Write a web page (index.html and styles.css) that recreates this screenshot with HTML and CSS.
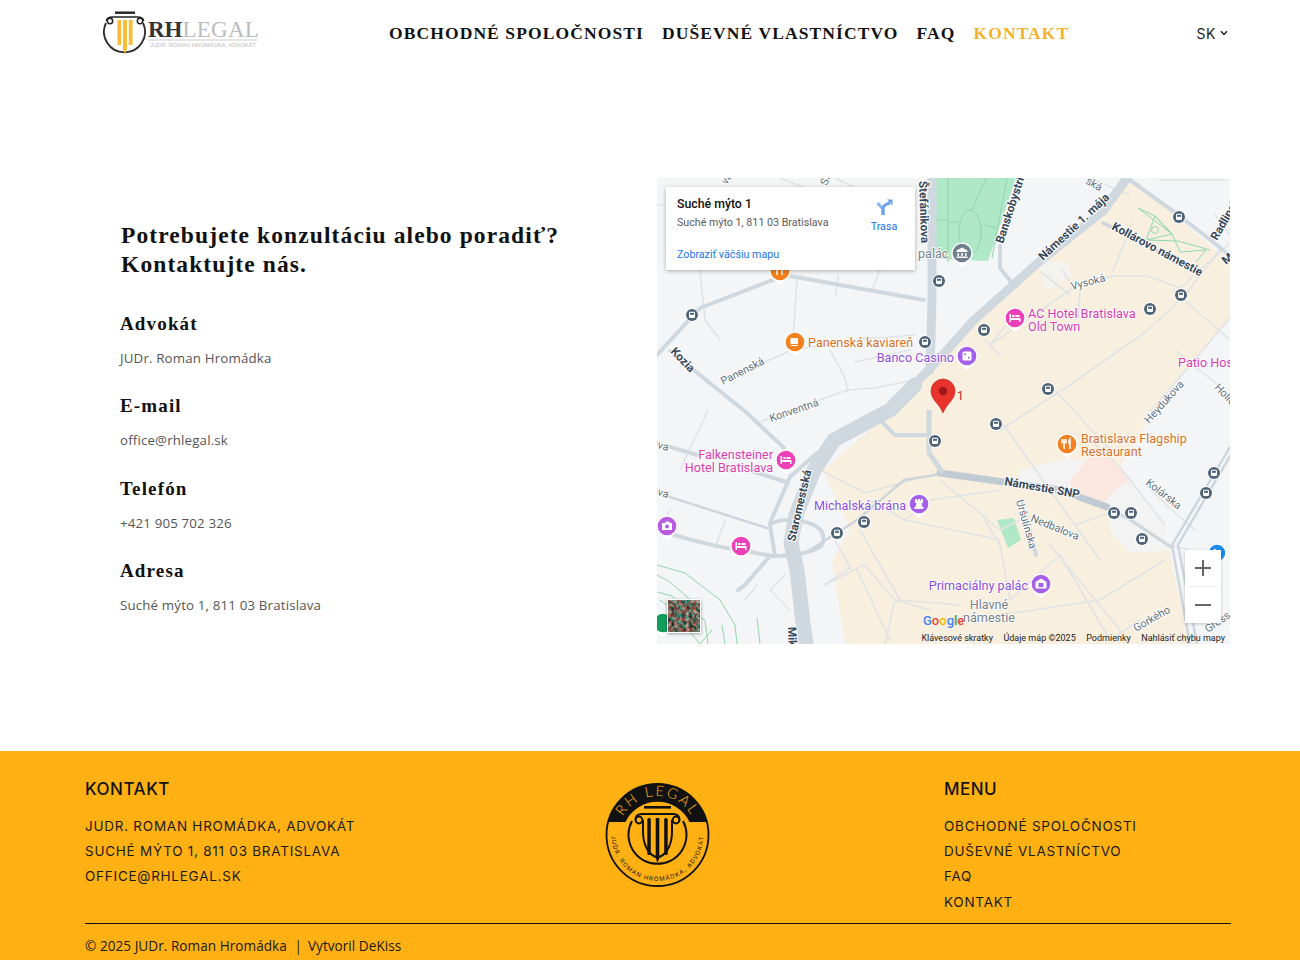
FILE: index.html
```html
<!DOCTYPE html>
<html lang="sk">
<head>
<meta charset="utf-8">
<title>RH Legal – Kontakt</title>
<link rel="stylesheet" href="styles.css">
</head>
<body>
<header class="site-header">
  <a class="logo" href="#">
    <svg class="logo-svg" viewBox="103 10 156 46" width="156" height="46">
      <path class="l-ring" d="M106 23 A20.500 20.500 0 1 0 143 23"/>
      <rect class="l-black" x="115" y="11.500" width="20" height="2.400"/>
      <path class="l-cap" d="M106.500 21 C106.500 17 110 17 113 17 H137 C140 17 143.500 17 143.500 21"/>
      <circle class="l-scroll" cx="110" cy="21" r="2.700"/>
      <circle class="l-scroll" cx="140" cy="21" r="2.700"/>
      <rect class="l-gold" x="117.500" y="20" width="3.800" height="25"/>
      <path class="l-gold" d="M123 20 H127 V49 L125 54 L123 49Z"/>
      <rect class="l-gold" x="128.800" y="20" width="3.800" height="25"/>
      <text class="l-rh" x="148" y="37">RH<tspan class="l-legal">LEGAL</tspan></text>
      <rect class="l-rule" x="148" y="39.500" width="109" height="1"/>
      <text class="l-sub" x="150" y="47">JUDR. ROMAN HROMÁDKA, ADVOKÁT</text>
    </svg>
  </a>
  <nav class="main-nav">
    <a href="#">OBCHODNÉ SPOLOČNOSTI</a>
    <a href="#">DUŠEVNÉ VLASTNÍCTVO</a>
    <a href="#">FAQ</a>
    <a class="is-active" href="#">KONTAKT</a>
  </nav>
  <div class="lang">SK <svg class="lang-caret" width="8" height="6" viewBox="0 0 8 6"><path d="M1 1.200 L4 4.400 L7 1.200"/></svg></div>
</header>

<main class="contact">
  <section class="contact-info">
    <h1>Potrebujete konzultáciu alebo poradiť?<br>Kontaktujte nás.</h1>
    <div class="item"><h3>Advokát</h3><p>JUDr. Roman Hromádka</p></div>
    <div class="item"><h3>E-mail</h3><p>office@rhlegal.sk</p></div>
    <div class="item"><h3>Telefón</h3><p>+421 905 702 326</p></div>
    <div class="item"><h3>Adresa</h3><p>Suché mýto 1, 811 03 Bratislava</p></div>
  </section>

  <div class="map">
    <svg class="map-svg" viewBox="657 178 573 466" width="573" height="466">
      <defs>
        <symbol id="pin" overflow="visible">
          <path class="pin-halo" d="M0 14 L-6.500 8.800 A10.800 10.800 0 1 1 6.500 8.800Z"/>
          <circle class="pin-fill" r="9.300"/>
        </symbol>
        <symbol id="tr" overflow="visible">
          <circle class="tr-halo" r="7"/>
          <circle class="tr-fill" r="6"/>
          <rect class="tr-glyph" x="-3" y="-3.200" width="6" height="6.200" rx="1.200"/>
          <rect class="tr-fill" x="-2" y="-2.200" width="4" height="2"/>
        </symbol>
        <filter id="sat-noise" x="0" y="0" width="100%" height="100%" color-interpolation-filters="sRGB">
          <feTurbulence type="fractalNoise" baseFrequency="0.28" numOctaves="3" seed="7"/>
          <feColorMatrix type="matrix" values="1.500 0 0 0 -.33  .4 .9 0 0 -.25  .4 .8 0 0 -.25  0 0 0 0 1"/>
        </filter>
      </defs>

      <rect class="m-bg" x="657" y="178" width="573" height="466"/>
      <!-- old town -->
      <path class="m-town" d="M1130 178 L1230 262 V318 L1153 411 L1120 467 L1167 543 L1187 627 L1195 644 H845 L832 560 L850 530 L823 470 L905 400 L940 358 L1040 261 L1103 211Z"/>
      <path class="m-pale" d="M1040 262 L1068 262 L1072 275 L1050 290 L1042 285Z"/>
      <path class="m-white" d="M1020 470 L1070 458 L1117 470 L1165 525 L1167 550 L1130 553 L1110 530 L1107 507 L1020 482Z"/>
      <path class="m-pink" d="M1070 480 L1090 457 L1108 457 L1130 478 L1112 492 L1105 503 L1072 492Z"/>
      <!-- greens -->
      <path class="m-green" d="M935 178 H1016 L988 261 L940 259 L935 240Z"/>
      <path class="m-green" d="M997 520 L1014 518 L1021 540 L1008 548Z"/>
      <g class="m-park">
        <ellipse cx="970" cy="232" rx="11" ry="22"/>
        <path d="M948 178 V262 M986 178 L972 210 M948 222 H958 M985 225 L996 228 M1007 178 L992 258 M936 220 H948"/>
        <path d="M1138 208 L1155 216 L1172 234 L1180 252 L1206 250 L1196 262 M1155 216 L1146 240 L1172 234 L1155 216 M1146 240 L1178 241 L1210 250 M1138 208 L1172 234"/>
        <circle cx="1155" cy="230" r="3.500"/>
        <path d="M657 565 L685 573 L720 600 L735 625 L737 644 M657 592 L672 596 L690 612 L705 620 L708 644 M725 644 L722 625 M760 644 L757 618 M700 644 L712 630 M657 575 L670 582 L702 610 M660 600 L668 606 M690 632 L700 644"/>
      </g>
      <!-- minor roads -->
      <g class="r-thin">
        <path d="M780 178 L810 190 M835 178 L860 190 M657 205 L700 207 M700 270 L705 320 L720 340 M838 275 L836 295 M880 270 L872 290 M797 280 L792 355"/>
        <path d="M722 381 L790 351 L850 340 L915 335 M855 362 L910 350 M830 350 L845 378 L848 392"/>
        <path d="M757 423 L817 401 L847 390 L874 388 L925 378"/>
        <path d="M708 410 L680 470 M670 510 L660 530 M725 520 L715 548"/>
        <path d="M1090 178 L1130 195 M1225 180 L1160 180 M1215 215 L1230 235"/>
        <path d="M1041 272 L1070 295 M1062 270 L1075 290 M990 345 L1073 288 L1113 276 L1147 276 L1180 288 L1230 243"/>
        <path d="M985 340 L1000 355 M1010 320 L990 345 M1078 318 L1080 290 M1113 271 L1132 223"/>
        <path d="M1000 430 L1070 385 L1148 330 L1185 295 L1220 250"/>
        <path d="M1173 290 L1230 340 M1175 350 L1230 395 M1150 412 L1230 318"/>
        <path d="M1000 420 L1100 560 M1050 385 L1110 450 M1090 440 L1120 467 L1165 525"/>
        <path d="M940 480 L1000 530 L1020 520 M985 520 L1000 545 L1010 600 M905 520 L1000 540"/>
        <path d="M870 500 L905 520 L930 500 L1000 490 M860 530 L900 600 L960 605 M824 585 L864 565 L895 600 L930 610 M895 600 L885 644 M857 570 L890 640"/>
        <path d="M820 470 L865 493 L912 480 M824 585 L850 568 L835 540"/>
        <path d="M1075 525 L1110 513 M1050 545 L1120 630 M1010 600 L1060 555 M1000 615 L1100 600 L1165 560 M1060 555 L1110 640 L1140 620"/>
        <path d="M1145 484 L1172 510 L1195 530 M1130 518 L1170 545 L1190 550"/>
        <path d="M754 472 L790 485 M757 585 L745 600 M785 575 L770 590 L790 610"/>
      </g>
      <g class="r-mid">
        <path d="M657 355 L700 308 L770 281 L790 276 L924 300"/>
        <path d="M670 351 L747 413 L784 448"/>
        <path d="M657 443 L697 455 M754 472 L787 482"/>
        <path d="M674 535 C700 542 720 548 740 550 L772 556 C795 556 815 552 822 545 C826 535 822 526 805 522 C790 518 775 520 770 525 L775 556"/>
        <path d="M770 523 L790 477 L817 453"/>
        <path d="M880 420 L895 435 L925 435"/>
        <path d="M1022 501 L1036 555"/>
        <path d="M1127 178 L1173 211 L1212 241 L1230 256"/>
        <path d="M1103 223 L1140 241 L1200 275"/>
        <path d="M1000 246 L1000 268 L1012 283"/>
        <path d="M769 557 L745 585 L738 590"/>
      </g>
      <g class="r-line">
        <path d="M657 493 L767 528"/>
        <path d="M810 550 L857 520 L904 480 L947 473"/>
        <path d="M1230 447 L1172 545 L1190 644 M1230 456 L1178 545 L1197 644"/>
        <path d="M1107 507 L1130 520 L1172 548"/>
      </g>
      <g class="r-main">
        <path d="M1127 178 L1103 211 L1040 261 L973 321 L940 358 L890 410"/>
        <path d="M932 178 V300 L930 370"/>
      </g>
      <g class="r-big">
        <path d="M915 385 L890 410 L834 440 L814 470 L796 515 L791 543 L797 570 L803 623 L806 644"/>
      </g>
      <g class="r-snp">
        <path d="M940 473 L1060 490 L1107 507"/>
      </g>
      <path class="r-ring" d="M929 410 V453 L943 473"/>

      <!-- road names -->
      <g class="lb-strong">
        <text transform="translate(919 181) rotate(88)">Štefánikova</text>
        <text transform="translate(1003 244) rotate(-72)">Banskobystrická</text>
        <text transform="translate(1043 261) rotate(-43)">Námestie 1. mája</text>
        <text transform="translate(1111 229) rotate(28)">Kollárovo námestie</text>
        <text transform="translate(1217 241) rotate(-60)">Radlinského</text>
        <text transform="translate(1226 265) rotate(-40)">M</text>
        <text transform="translate(795 542) rotate(-77)">Staromestská</text>
        <text transform="translate(670 352) rotate(46)">Kozia</text>
        <text transform="translate(1004 485) rotate(10)">Námestie SNP</text>
        <text transform="translate(788 627) rotate(88)">Mik</text>
      </g>
      <g class="lb-road">
        <text transform="translate(1072 290) rotate(-15)">Vysoká</text>
        <text transform="translate(723 385) rotate(-27)">Panenská</text>
        <text transform="translate(771 422) rotate(-19)">Konventná</text>
        <text transform="translate(1016 501) rotate(74)">Uršulínska</text>
        <text transform="translate(1030 521) rotate(22)">Nedbalova</text>
        <text transform="translate(1145 484) rotate(38)">Kolárska</text>
        <text transform="translate(1149 424) rotate(-48)">Heydukova</text>
        <text transform="translate(1136 632) rotate(-30)">Gorkého</text>
        <text transform="translate(1214 388) rotate(46)">Hollého</text>
        <text transform="translate(1208 633) rotate(-35)">Gross</text>
        <text transform="translate(727 185) rotate(-60)">va</text>
        <text transform="translate(827 186) rotate(-70)">Ssk</text>
        <text transform="translate(1085 183) rotate(30)">ská</text>
        <text transform="translate(657 448) rotate(16)">va</text>
        <text transform="translate(657 495) rotate(16)">va</text>
      </g>

      <!-- transit stops -->
      <g>
        <use href="#tr" x="939" y="281"/><use href="#tr" x="692" y="315"/><use href="#tr" x="925" y="342"/>
        <use href="#tr" x="1179" y="217"/><use href="#tr" x="1181" y="295"/><use href="#tr" x="1150" y="309"/>
        <use href="#tr" x="984" y="330"/><use href="#tr" x="1048" y="389"/><use href="#tr" x="935" y="441"/>
        <use href="#tr" x="864" y="522"/><use href="#tr" x="837" y="533"/><use href="#tr" x="996" y="424"/>
        <use href="#tr" x="1214" y="473"/><use href="#tr" x="1206" y="493"/><use href="#tr" x="1114" y="513"/>
        <use href="#tr" x="1131" y="513"/><use href="#tr" x="1142" y="539"/>
      </g>

      <!-- places -->
      <g class="pin-orange" transform="translate(780 271)"><use href="#pin"/><path class="pin-ic" d="M-3 -4 V4 M2 -4 V4"/></g>
      <g class="pin-orange" transform="translate(795 342)"><use href="#pin"/><path class="pin-solid" d="M-4.500 -4 H3 V2 H-4.500Z M-4.500 3 H3 V4 H-4.500Z"/></g>
      <g class="pin-orange" transform="translate(1067 444)"><use href="#pin"/><path class="pin-ic" d="M-3 -5 V5 M-5 -5 V-1.500 H-1 V-5 M3 5 V-5 C1.500 -3 1.500 0 3 0"/></g>
      <g class="pin-purple" transform="translate(967 356)"><use href="#pin"/><rect class="pin-solid" x="-4.500" y="-4.500" width="9" height="9" rx="1.500"/><circle class="pin-dot" cx="-1.800" cy="-1.800" r="1"/><circle class="pin-dot" cx="1.800" cy="1.800" r="1"/></g>
      <g class="pin-purple" transform="translate(919 504)"><use href="#pin"/><path class="pin-solid" d="M-4 -5 H-2 V-3.500 H-1 V-5 H1 V-3.500 H2 V-5 H4 V-1 H2.500 L3.500 3 H4.500 V5 H-4.500 V3 H-3.500 L-2.500 -1 H-4Z"/></g>
      <g class="pin-purple" transform="translate(1041 584)"><use href="#pin"/><path class="pin-solid" d="M0 -5.500 L5.500 -2 V4.500 H-5.500 V-2Z"/><rect class="pin-dot" x="-2.500" y="-1" width="5" height="4"/></g>
      <g class="pin-pink" transform="translate(1015 318)"><use href="#pin"/><path class="pin-solid" d="M-5.500 -4 H-4 V0 H5.500 V4 H4 V2 H-4 V4 H-5.500Z M-3 -3 H-.5 V-1 H-3Z M.5 -3 H4.500 V-1 H.5Z"/></g>
      <g class="pin-pink" transform="translate(786 460)"><use href="#pin"/><path class="pin-solid" d="M-5.500 -4 H-4 V0 H5.500 V4 H4 V2 H-4 V4 H-5.500Z M-3 -3 H-.5 V-1 H-3Z M.5 -3 H4.500 V-1 H.5Z"/></g>
      <g class="pin-pink" transform="translate(741 546)"><use href="#pin"/><path class="pin-solid" d="M-5.500 -4 H-4 V0 H5.500 V4 H4 V2 H-4 V4 H-5.500Z M-3 -3 H-.5 V-1 H-3Z M.5 -3 H4.500 V-1 H.5Z"/></g>
      <g class="pin-violet" transform="translate(667 526)"><use href="#pin"/><path class="pin-solid" d="M-5 -3 H-2 L-1 -4.500 H2 L3 -3 H5 V4 H-5Z"/><circle class="pin-dot" cy=".5" r="2"/></g>
      <g class="pin-gray" transform="translate(962 253)"><use href="#pin"/><path class="pin-solid" d="M0 -5.500 L5.500 -2.500 V-1 H-5.500 V-2.500Z M-4.500 0 H-3 V3 H-4.500Z M-.75 0 H.75 V3 H-.75Z M3 0 H4.500 V3 H3Z M-5.500 3.500 H5.500 V5 H-5.500Z"/></g>
      <g class="pin-green" transform="translate(663 623)"><use href="#pin"/></g>
      <circle class="pin-blue" cx="1217" cy="553" r="9"/>
      <path class="pin-ic" d="M1214 549 L1219 553 L1215 558"/>

      <g class="lb-orange">
        <text x="808" y="347">Panenská kaviareň</text>
        <text x="1081" y="443">Bratislava Flagship</text>
        <text x="1081" y="456">Restaurant</text>
      </g>
      <g class="lb-pink">
        <text x="1028" y="318">AC Hotel Bratislava</text>
        <text x="1028" y="331">Old Town</text>
        <text class="lb-end" x="773" y="459">Falkensteiner</text>
        <text class="lb-end" x="773" y="472">Hotel Bratislava</text>
        <text x="1178" y="367">Patio Hostel</text>
      </g>
      <g class="lb-purple">
        <text class="lb-end" x="954" y="362">Banco Casino</text>
        <text class="lb-end" x="906" y="510">Michalská brána</text>
        <text class="lb-end" x="1028" y="590">Primaciálny palác</text>
      </g>
      <g class="lb-gray">
        <text x="918" y="258">palác</text>
        <text class="lb-mid" x="989" y="609">Hlavné</text>
        <text class="lb-mid" x="989" y="622">námestie</text>
      </g>

      <!-- red marker -->
      <path class="mk-red" d="M943 413 C939 403 931 400 931 391 A12 12 0 0 1 955 391 C955 400 947 403 943 413Z"/>
      <circle class="mk-dot" cx="943" cy="391" r="4.200"/>
      <text class="mk-label" x="957" y="400">1</text>

      <!-- google -->
      <text class="g-logo" x="923" y="625"><tspan class="g-b">G</tspan><tspan class="g-r">o</tspan><tspan class="g-y">o</tspan><tspan class="g-b">g</tspan><tspan class="g-g">l</tspan><tspan class="g-r">e</tspan></text>
    </svg>

    <div class="info-card">
      <div class="info-text">
        <div class="info-title">Suché mýto 1</div>
        <div class="info-addr">Suché mýto 1, 811 03 Bratislava</div>
        <a class="info-link" href="#">Zobraziť väčšiu mapu</a>
      </div>
      <div class="info-dir">
        <svg width="18" height="18" viewBox="0 0 18 18"><path class="dir-a" d="M8 17 V11 L2.500 5"/><path class="dir-b" d="M8 17 V11 C8 8 11 6 15 5"/><path class="dir-c" d="M12 1.500 H17.500 V7.500Z"/></svg>
        <span>Trasa</span>
      </div>
    </div>

    <div class="sat-thumb"><svg width="32" height="32" viewBox="0 0 32 32"><rect width="32" height="32" filter="url(#sat-noise)"/></svg></div>

    <div class="zoom-ctl">
      <button class="zoom-btn" type="button"><svg width="18" height="18" viewBox="0 0 18 18"><path d="M1 9 H17 M9 1 V17"/></svg></button>
      <span class="zoom-sep"></span>
      <button class="zoom-btn" type="button"><svg width="18" height="18" viewBox="0 0 18 18"><path d="M1 9 H17"/></svg></button>
    </div>

    <div class="attrib">
      <span>Klávesové skratky</span><span>Údaje máp ©2025</span><span>Podmienky</span><span>Nahlásiť chybu mapy</span>
    </div>
  </div>
</main>

<footer class="site-footer">
  <div class="footer-grid">
    <div class="f-col">
      <h4>KONTAKT</h4>
      <p>JUDR. ROMAN HROMÁDKA, ADVOKÁT</p>
      <p>SUCHÉ MÝTO 1, 811 03 BRATISLAVA</p>
      <p>OFFICE@RHLEGAL.SK</p>
    </div>
    <div class="f-logo">
      <svg viewBox="0 0 106 106" width="106" height="106">
        <defs>
          <path id="arc-top" d="M13.500 53 A39 39 0 0 1 91.500 53"/>
          <path id="arc-bot" d="M6.500 53 A46 46 0 0 0 98.500 53"/>
        </defs>
        <circle class="fl-ring" cx="52.500" cy="53" r="51"/>
        <path class="fl-band" d="M2.700 40 A51.500 51.500 0 0 1 102.300 40 L84.500 40 A35.500 35.500 0 0 0 20.500 40Z"/>
        <text class="fl-title"><textPath href="#arc-top" startOffset="50%">RH LEGAL</textPath></text>
        <text class="fl-sub"><textPath href="#arc-bot" startOffset="50%">JUDR. ROMAN HROMÁDKA, ADVOKÁT</textPath></text>
        <path class="fl-line" d="M27 39 A29 29 0 1 0 78 39"/>
        <path class="fl-line" d="M38 38 V50 C38 65 46 75 52.500 75 C59 75 67 65 67 50 V38"/>
        <rect class="fl-fill" x="39" y="24" width="27" height="2.600"/>
        <path class="fl-line" d="M30.500 38 C30.500 33 34 32 37 32 H68 C71 32 74.500 33 74.500 38"/>
        <circle class="fl-scroll" cx="34" cy="38" r="3.400"/>
        <circle class="fl-scroll" cx="71" cy="38" r="3.400"/>
        <rect class="fl-fill" x="42.300" y="36" width="3.500" height="37" rx="1.500"/>
        <path class="fl-fill" d="M50.700 36 H54.300 V76 L52.500 81 L50.700 76Z"/>
        <rect class="fl-fill" x="59.200" y="36" width="3.500" height="37" rx="1.500"/>
      </svg>
    </div>
    <div class="f-col">
      <h4>MENU</h4>
      <p>OBCHODNÉ SPOLOČNOSTI</p>
      <p>DUŠEVNÉ VLASTNÍCTVO</p>
      <p>FAQ</p>
      <p>KONTAKT</p>
    </div>
  </div>
  <div class="copyright">© 2025 JUDr. Roman Hromádka <span class="sep">|</span>Vytvoril DeKiss</div>
</footer>
</body>
</html>
```

FILE: styles.css
```css
* { box-sizing: border-box; }
html, body { margin: 0; padding: 0; }
body { font-family: "Open Sans", "Liberation Sans", sans-serif; color: #111; background: #fff; }

/* header */
.site-header { height: 66px; display: flex; align-items: center; padding: 0 72px 0 103px; }
.logo { display: block; width: 156px; height: 46px; }
.logo-svg { display: block; }
.l-ring { fill: none; stroke: #2b2b2b; stroke-width: 1.8; }
.l-black { fill: #222; }
.l-cap { fill: none; stroke: #222; stroke-width: 1.6; }
.l-scroll { fill: #fff; stroke: #222; stroke-width: 1.5; }
.l-gold { fill: #f6bd36; }
.l-rh { font: 700 23px "Liberation Serif", serif; fill: #333; }
.l-legal { font-weight: 400; fill: #bcbcbc; letter-spacing: .25px; }
.l-rule { fill: #ccc; }
.l-sub { font: 400 5.8px "Liberation Sans", sans-serif; fill: #bdbdbd; }

.main-nav { margin-left: 130px; display: flex; gap: 18px; }
.main-nav a { font: 700 17.5px "Liberation Serif", serif; letter-spacing: 1.1px; color: #111; text-decoration: none; white-space: nowrap; }
.main-nav a.is-active { color: #f5b32c; }
.lang { margin-left: auto; font: 400 14px "Inter", sans-serif; letter-spacing: .6px; color: #222; display: flex; align-items: center; gap: 4px; }
.lang-caret path { fill: none; stroke: #222; stroke-width: 1.4; }

/* contact */
.contact { display: flex; justify-content: space-between; align-items: flex-start; padding: 112px 70px 107px 120px; }
.contact-info { width: 480px; padding-top: 43px; }
.contact-info h1 { margin: 0 0 32px 1px; font: 700 23.5px/29px "Liberation Serif", serif; letter-spacing: 1.1px; color: #111; }
.item { height: 82.3px; }
.item h3 { margin: 0; font: 700 19px/26px "Liberation Serif", serif; letter-spacing: 1.15px; color: #111; }
.item p { margin: 11px 0 0; font-size: 13.3px; line-height: 20px; letter-spacing: .16px; color: #555; }

/* map */
.map { position: relative; width: 573px; height: 466px; overflow: hidden; flex: none; font-family: "Roboto", sans-serif; }
.map-svg { display: block; }
.m-bg { fill: #f4f5f7; }
.m-town { fill: #f8efdf; }
.m-pale { fill: #f5f3ee; }
.m-white { fill: #f3f3f3; }
.m-pink { fill: #fbe6e0; }
.m-green { fill: #aee8c6; }
.m-park { fill: none; stroke: #8fd6ae; stroke-width: 1; }
.r-thin, .r-mid, .r-line, .r-main, .r-big, .r-snp { fill: none; stroke-linejoin: round; stroke-linecap: round; }
.r-thin { stroke: #e0e3e6; stroke-width: 1.6; }
.r-mid { stroke: #d0d8df; stroke-width: 4; }
.r-line { stroke: #ccd5dc; stroke-width: 2.4; }
.r-main { stroke: #d0d8df; stroke-width: 9; }
.r-big { stroke: #d0d8df; stroke-width: 15; }
.r-snp { stroke: #c0cad3; stroke-width: 7; }
.r-ring { fill: none; stroke: #d0d8df; stroke-width: 5; }

.lb-strong text, .lb-road text { paint-order: stroke; stroke: #fff; stroke-width: 2px; }
.lb-strong { font: 700 11.7px "Roboto", sans-serif; fill: #37485a; }
.lb-road { font: 400 10.8px "Roboto", sans-serif; fill: #606f7e; }
.lb-orange, .lb-pink, .lb-purple, .lb-gray { font: 400 12.6px "Roboto", sans-serif; }
.lb-orange text, .lb-pink text, .lb-purple text, .lb-gray text { paint-order: stroke; stroke: #fff; stroke-width: 1.5px; }
.lb-orange { fill: #d9701e; }
.lb-pink { fill: #d93bb0; }
.lb-purple { fill: #8b50d8; }
.lb-gray { fill: #75828e; }
.lb-end { text-anchor: end; }
.lb-mid { text-anchor: middle; }

.pin-halo { fill: #fff; }
.pin-fill { fill: currentColor; }
.pin-orange { color: #f5801f; }
.pin-purple { color: #a65fe8; }
.pin-pink { color: #ec3fb8; }
.pin-violet { color: #b95ae0; }
.pin-gray { color: #6f7f8e; }
.pin-green { color: #12a05c; }
.pin-blue { fill: #1a8cf0; stroke: #fff; stroke-width: 1.5; }
.pin-solid { fill: #fff; }
.pin-dot { fill: #a65fe8; }
.pin-ic { fill: none; stroke: #fff; stroke-width: 1.5; }
.tr-halo { fill: #fff; opacity: .85; }
.tr-fill { fill: #4f6478; }
.tr-glyph { fill: #fff; }

.mk-red { fill: #e8332c; stroke: #c5221f; stroke-width: .6; }
.mk-dot { fill: #a0171b; }
.mk-label { font: 400 12px "Roboto", sans-serif; fill: #c5221f; }

.g-logo { font: 500 13px "Roboto", sans-serif; }
.g-b { fill: #4285f4; } .g-r { fill: #ea4335; } .g-y { fill: #fbbc05; } .g-g { fill: #34a853; }

.info-card { position: absolute; left: 9px; top: 9px; width: 249px; height: 83px; background: #fff; box-shadow: 0 1px 4px rgba(0,0,0,.3); padding: 9px 10px 0 11px; display: flex; justify-content: space-between; }
.info-title { font: 500 12.3px/16px "Roboto", sans-serif; color: #111; }
.info-addr { margin-top: 4px; font: 400 10.7px/14px "Roboto", sans-serif; color: #5b5b5b; }
.info-link { display: block; margin-top: 18px; font: 400 10.7px/14px "Roboto", sans-serif; color: #1a73e8; text-decoration: none; }
.info-dir { width: 40px; margin-right: 1px; display: flex; flex-direction: column; align-items: center; padding-top: 2px; font: 400 10.7px/14px "Roboto", sans-serif; color: #1a73e8; }
.info-dir svg { display: block; margin-bottom: 4px; }
.dir-a { fill: none; stroke: #8ab4f0; stroke-width: 3; }
.dir-b { fill: none; stroke: #6ba1ee; stroke-width: 3; }
.dir-c { fill: #6ba1ee; }

.sat-thumb { position: absolute; left: 10px; top: 421px; width: 34px; height: 34px; border: 1px solid #fff; box-shadow: 0 1px 3px rgba(0,0,0,.35); }
.sat-thumb svg { display: block; }

.zoom-ctl { position: absolute; left: 528px; top: 372px; width: 36px; height: 73px; background: #fff; box-shadow: 0 1px 3px rgba(0,0,0,.2); display: flex; flex-direction: column; align-items: center; }
.zoom-btn { flex: 1; width: 36px; padding: 0; border: 0; background: none; display: flex; align-items: center; justify-content: center; }
.zoom-btn path { fill: none; stroke: #666; stroke-width: 2; }
.zoom-sep { width: 28px; height: 1px; background: #e6e6e6; }

.attrib { position: absolute; right: 5px; bottom: 0; height: 11px; display: flex; gap: 10.5px; font: 400 9px/11px "Roboto", sans-serif; color: #222; white-space: nowrap; }

/* footer */
.site-footer { background: #ffb114; padding: 28px 69px 0 85px; height: 209px; color: #111; overflow: hidden; }
.footer-grid { display: grid; grid-template-columns: 286px 573px 1fr; height: 145px; border-bottom: 1px solid #111; }
.f-col h4 { margin: 0 0 15px; font: 500 17px/20px "Inter", sans-serif; letter-spacing: .5px; color: #111; }
.f-col p { margin: 0; font: 400 13.5px/25.2px "Inter", sans-serif; letter-spacing: .75px; color: #1a1a1a; white-space: nowrap; }
.f-logo { display: flex; justify-content: center; padding-top: 3px; }
.fl-ring { fill: none; stroke: #111; stroke-width: 1.8; }
.fl-band { fill: #111; }
.fl-title { font: 300 14.5px "Lato", sans-serif; letter-spacing: 2.2px; fill: #ffb114; text-anchor: middle; }
.fl-sub { font: 400 6px "Inter", sans-serif; letter-spacing: 1.1px; fill: #111; text-anchor: middle; }
.fl-fill { fill: #111; }
.fl-line { fill: none; stroke: #111; stroke-width: 2; }
.fl-scroll { fill: #ffb114; stroke: #111; stroke-width: 2; }
.copyright { margin-top: 11px; font-size: 13.6px; line-height: 22px; letter-spacing: .03px; color: #1a1a1a; white-space: nowrap; }
.sep { margin: 0 6px 0 4px; }
```
